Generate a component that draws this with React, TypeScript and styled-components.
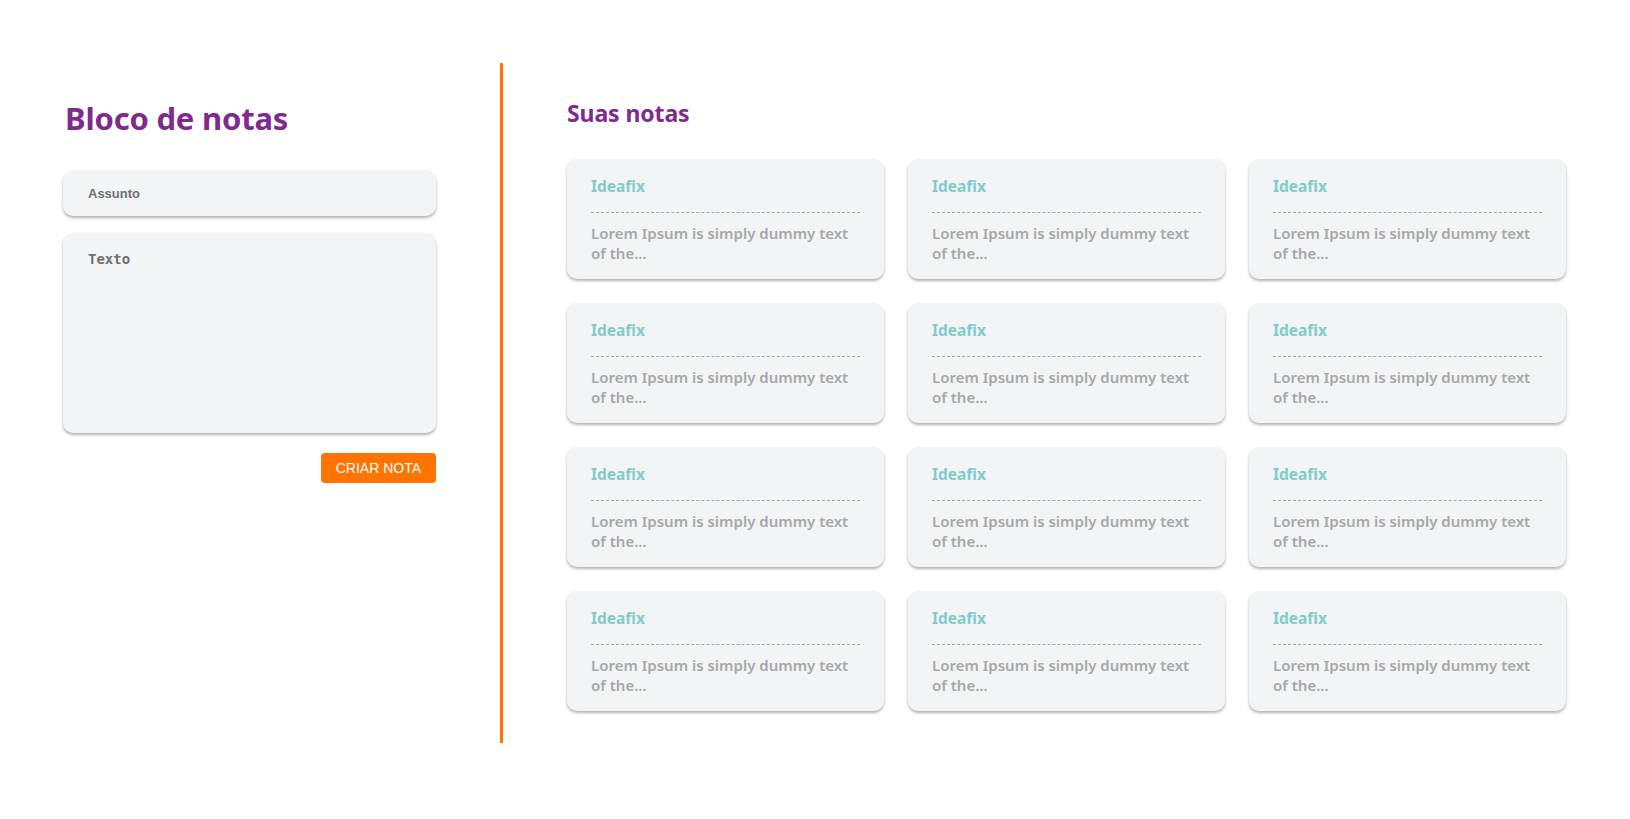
import React from "react";
import styled, { createGlobalStyle } from "styled-components";

const GlobalStyle = createGlobalStyle`
  html, body {
    margin: 0;
    padding: 0;
    background: #ffffff;
  }
  body {
    font-family: "Noto Sans", "Open Sans", sans-serif;
  }
  * { box-sizing: border-box; }
`;

const Page = styled.div`
  display: flex;
  align-items: flex-start;
  padding: 63px 64px 0 63px;
  min-height: 819px;
`;

const Editor = styled.section`
  width: 373px;
  flex-shrink: 0;
  display: flex;
  flex-direction: column;
  margin-right: 64px;
`;

const Divider = styled.div`
  width: 3px;
  height: 680px;
  background: #ff7300;
  flex-shrink: 0;
`;

const Notes = styled.section`
  flex: 1;
  margin-left: 64px;
  display: flex;
  flex-direction: column;
`;

const Title = styled.h1`
  margin: 35px 0 32px 2px;
  font-family: "Noto Sans", sans-serif;
  font-size: 31px;
  line-height: 40px;
  font-weight: 700;
  letter-spacing: -0.2px;
  color: #7f2a8d;
`;

const SubTitle = styled.h2`
  margin: 35px 0 31px 0;
  font-family: "Noto Sans", sans-serif;
  font-size: 23px;
  line-height: 30px;
  font-weight: 700;
  letter-spacing: -0.1px;
  color: #7f2a8d;
`;

const fieldBase = `
  width: 100%;
  border: none;
  outline: none;
  background: #f3f4f6;
  border-radius: 10px;
  box-shadow: 0 2px 3px rgba(0, 0, 0, 0.3);
  color: #555;
`;

const SubjectInput = styled.input`
  ${fieldBase}
  height: 46px;
  padding: 0 25px;
  font-family: "Liberation Sans", Arial, sans-serif;
  font-size: 13px;
  font-weight: 700;
  &::placeholder { color: #6f6f6f; }
`;

const TextInput = styled.textarea`
  ${fieldBase}
  height: 200px;
  margin-top: 17px;
  padding: 17px 25px;
  resize: none;
  font-family: "DejaVu Sans Mono", monospace;
  font-size: 14px;
  font-weight: 700;
  line-height: 18px;
  &::placeholder { color: #6f6f6f; }
`;

const Actions = styled.div`
  display: flex;
  justify-content: flex-end;
  margin-top: 20px;
`;

const CreateButton = styled.button`
  height: 30px;
  padding: 0 15px;
  border: none;
  border-radius: 4px;
  background: #ff7300;
  color: #ffffff;
  font-family: "Liberation Sans", Arial, sans-serif;
  font-size: 14px;
  cursor: pointer;
`;

const Grid = styled.div`
  display: grid;
  grid-template-columns: repeat(3, 1fr);
  gap: 24px;
`;

const Card = styled.article`
  background: #f3f4f6;
  border-radius: 10px;
  box-shadow: 0 2px 3px rgba(0, 0, 0, 0.3);
  padding: 17px 24px 16px;
  height: 120px;
`;

const CardTitle = styled.h3`
  margin: 0;
  font-family: "Noto Sans", sans-serif;
  font-size: 15.5px;
  line-height: 20px;
  font-weight: 700;
  color: #7fcdc8;
  padding-bottom: 16px;
  border-bottom: 1px dashed #a6a6a6;
`;

const CardText = styled.p`
  margin: 10px 0 0;
  font-family: "Noto Sans", sans-serif;
  font-size: 15px;
  line-height: 20px;
  font-weight: 600;
  color: #a8a8a8;
`;

const notes = Array.from({ length: 12 }, (_, i) => ({
  id: i,
  title: "Ideafix",
  text: "Lorem Ipsum is simply dummy text of the...",
}));

export default function App() {
  return (
    <>
      <GlobalStyle />
      <Page>
        <Editor>
          <Title>Bloco de notas</Title>
          <SubjectInput placeholder="Assunto" />
          <TextInput placeholder="Texto" />
          <Actions>
            <CreateButton>CRIAR NOTA</CreateButton>
          </Actions>
        </Editor>
        <Divider />
        <Notes>
          <SubTitle>Suas notas</SubTitle>
          <Grid>
            {notes.map((n) => (
              <Card key={n.id}>
                <CardTitle>{n.title}</CardTitle>
                <CardText>{n.text}</CardText>
              </Card>
            ))}
          </Grid>
        </Notes>
      </Page>
    </>
  );
}
